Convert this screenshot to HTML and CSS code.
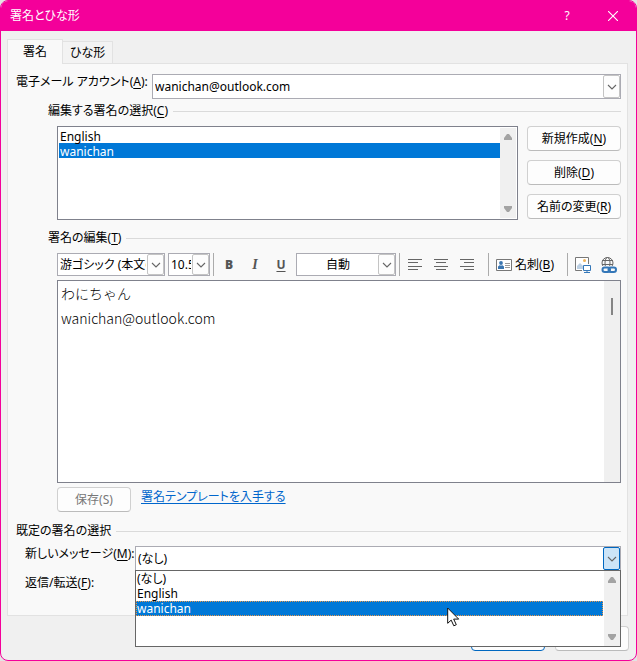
FILE: index.html
```html
<!DOCTYPE html>
<html lang="ja">
<head>
<meta charset="utf-8">
<title>署名とひな形</title>
<link rel="stylesheet" href="styles.css">
</head>
<body>
<svg class="defs" aria-hidden="true">
  <symbol id="chevron" viewBox="0 0 10 6"><path d="M1 1l4 4 4-4" fill="none" stroke="currentColor" stroke-width="1.1"/></symbol>
  <symbol id="up" viewBox="0 0 8 6"><path d="M3 0h2l3 4v2H0V4z" fill="#a3a3a3"/></symbol>
  <symbol id="down" viewBox="0 0 8 6"><path d="M0 0h8v2L5 6H3L0 2z" fill="#a3a3a3"/></symbol>
</svg>
<div class="window">
  <header class="titlebar">
    <h1>署名とひな形</h1>
    <button type="button" class="caption" aria-label="ヘルプ">?</button>
    <button type="button" class="caption" aria-label="閉じる"><svg width="10" height="10" viewBox="0 0 10 10"><path d="M0 0l10 10M10 0L0 10" stroke="#fff" stroke-width="1.1"/></svg></button>
  </header>
  <main class="content">
    <div class="tabs" role="tablist">
      <button type="button" role="tab" aria-selected="true" class="tab active">署名</button>
      <button type="button" role="tab" aria-selected="false" class="tab">ひな形</button>
    </div>
    <div class="panel" role="tabpanel">
      <div class="row">
        <label class="account-label" for="account">電子メール アカウント(<u>A</u>):</label>
        <div class="combo grow">
          <select id="account"><option>wanichan@outlook.com</option></select>
          <span class="arrow"><svg><use href="#chevron"/></svg></span>
        </div>
      </div>

      <section class="group">
        <h2 class="heading first"><label for="signatures">編集する署名の選択(<u>C</u>)</label></h2>
        <div class="indent signatures">
          <div class="listbox grow">
            <select id="signatures" size="5">
              <option>English</option>
              <option selected>wanichan</option>
            </select>
            <span class="scroll"><svg><use href="#up"/></svg><svg><use href="#down"/></svg></span>
          </div>
          <div class="actions">
            <button type="button" class="btn">新規作成(<u>N</u>)</button>
            <button type="button" class="btn">削除(<u>D</u>)</button>
            <button type="button" class="btn">名前の変更(<u>R</u>)</button>
          </div>
        </div>

        <h2 class="heading"><label for="editor">署名の編集(<u>T</u>)</label></h2>
        <div class="indent toolbar">
          <div class="combo font"><select aria-label="フォント"><option>游ゴシック (本文のフォント - 日本語)</option></select><span class="arrow"><svg><use href="#chevron"/></svg></span></div>
          <div class="combo size"><select aria-label="フォント サイズ"><option>10.5</option></select><span class="arrow"><svg><use href="#chevron"/></svg></span></div>
          <span class="sep"></span>
          <div class="styles">
            <button type="button" class="tool" aria-label="太字"><b>B</b></button>
            <button type="button" class="tool" aria-label="斜体"><i>I</i></button>
            <button type="button" class="tool" aria-label="下線"><u>U</u></button>
          </div>
          <div class="combo color"><select aria-label="フォントの色"><option>自動</option></select><span class="arrow"><svg><use href="#chevron"/></svg></span></div>
          <span class="sep"></span>
          <div class="aligns">
            <button type="button" class="tool" aria-label="左揃え"><svg width="14" height="11" viewBox="0 0 14 11"><path d="M0 .5h14M0 3.500h10M0 7.500h14M0 10.500h10" stroke="#666"/></svg></button>
            <button type="button" class="tool" aria-label="中央揃え"><svg width="14" height="11" viewBox="0 0 14 11"><path d="M0 .5h14M2 3.500h10M0 7.500h14M2 10.500h10" stroke="#666"/></svg></button>
            <button type="button" class="tool" aria-label="右揃え"><svg width="14" height="11" viewBox="0 0 14 11"><path d="M0 .5h14M4 3.500h10M0 7.500h14M4 10.500h10" stroke="#666"/></svg></button>
          </div>
          <span class="sep"></span>
          <button type="button" class="tool card">
            <svg width="16" height="12" viewBox="0 0 16 12"><path d="M.5.5h15v11H.5z" fill="#fff" stroke="#777"/><circle cx="5" cy="4" r="1.900" fill="#3a75b0"/><path d="M2 10V7.500L4 6l1 1 1-1 2 1.500V10z" fill="#3a75b0"/><path d="M9 4.500h5M9 6.500h5M9 8.500h5" stroke="#999"/></svg>
            <span>名刺(<u>B</u>)</span>
          </button>
          <span class="sep"></span>
          <div class="inserts">
            <button type="button" class="tool" aria-label="画像"><svg width="16" height="16" viewBox="0 0 16 16"><path d="M7 13.500H.5V.5h13V7" fill="#fff" stroke="#777"/><circle cx="9.500" cy="3.500" r="1.500" fill="#f0b35a"/><path d="M2 12V9l3-3 3 3v3z" fill="#bcd0e4"/><path d="M8.500 8.500h7v5h-7z" fill="#fff" stroke="#3477b8"/><path d="M12 13v2.500M9 15.500h6" stroke="#3477b8"/></svg></button>
            <button type="button" class="tool" aria-label="ハイパーリンク"><svg width="16" height="16" viewBox="0 0 16 16"><g fill="none" stroke="#666"><circle cx="6.500" cy="6" r="5.500"/><ellipse cx="6.500" cy="6" rx="2.500" ry="5.500"/><path d="M1 3.500h11M1 7.500h11"/></g><path d="M1 9h15v7H1z" fill="#f9f9f9"/><g fill="none" stroke="#3477b8" stroke-width="2"><rect x="1.500" y="10.500" width="7.500" height="4.500" rx="2.250"/><rect x="7.500" y="10.500" width="7.500" height="4.500" rx="2.250"/></g></svg></button>
          </div>
        </div>
        <div class="indent editor">
          <textarea id="editor" spellcheck="false">わにちゃん
wanichan@outlook.com</textarea>
          <span class="scroll"><span class="thumb"></span></span>
        </div>
        <div class="indent save">
          <button type="button" class="btn" disabled>保存(S)</button>
          <a href="#templates">署名テンプレートを入手する</a>
        </div>
      </section>

      <section>
        <h2 class="heading">既定の署名の選択</h2>
        <div class="row default">
          <label for="new-message">新しいメッセージ(<u>M</u>):</label>
          <div class="combo grow open">
            <select id="new-message"><option>(なし)</option></select>
            <span class="arrow"><svg><use href="#chevron"/></svg></span>
            <div class="popup">
              <ul role="listbox" aria-label="新しいメッセージ">
                <li role="option">(なし)</li>
                <li role="option">English</li>
                <li role="option" aria-selected="true">wanichan</li>
              </ul>
              <span class="scroll"><svg><use href="#up"/></svg><svg><use href="#down"/></svg></span>
              <svg class="pointer" width="13" height="20" viewBox="0 0 13 20"><path d="M.7 1v15.300l3.500-3.200 2.600 5.700 2.500-1.100-2.600-5.600h5z" fill="#fff" stroke="#111"/></svg>
            </div>
          </div>
        </div>
        <div class="row default">
          <label for="reply">返信/転送(<u>F</u>):</label>
          <div class="combo grow">
            <select id="reply"></select>
            <span class="arrow"><svg><use href="#chevron"/></svg></span>
          </div>
        </div>
      </section>
    </div>
  </main>
  <footer class="footer">
    <button type="button" class="btn primary" aria-label="OK"></button>
    <button type="button" class="btn" aria-label="キャンセル"></button>
  </footer>
</div>
</body>
</html>
```
FILE: styles.css
```css
* { box-sizing: border-box; }

body {
  margin: 0;
  background: #e4e4e4;
  color: #000;
  font: 12px/16px "Noto Sans", "Noto Sans CJK JP", sans-serif;
  font-feature-settings: "palt";
}

button, select { font: inherit; font-feature-settings: inherit; color: inherit; margin: 0; }
h1, h2 { margin: 0; font: inherit; }
u { text-underline-offset: 2px; }
svg { display: block; }
.defs { position: absolute; width: 0; height: 0; }
.grow { flex: 1; min-width: 0; }

.window {
  display: flex;
  flex-direction: column;
  min-height: 100vh;
  border: 1px solid #f4009a;
  border-radius: 8px;
  background: #f0f0f0;
  overflow: hidden;
}

.titlebar { display: flex; height: 30px; padding-left: 9px; background: #f4009a; color: #fff; }
.titlebar h1 { flex: 1; line-height: 30px; }
.caption {
  display: grid;
  place-items: center;
  width: 46px;
  padding: 0;
  border: 0;
  background: none;
}

.content { padding: 8px 8px 0 6px; }
.tabs { display: flex; align-items: flex-end; height: 25px; margin-bottom: -1px; position: relative; }
.tab {
  height: 23px;
  padding: 0 7px;
  border: 1px solid #e2e2e2;
  border-left: 0;
  background: #f3f3f3;
}
.tab.active { height: 25px; padding: 0 15px; border-left: 1px solid #e2e2e2; border-bottom: 0; background: #f9f9f9; }
.panel { padding: 10px 6px 15px 8px; border: 1px solid #e2e2e2; background: #f9f9f9; }

.row { display: flex; align-items: flex-start; }
.account-label { width: 136px; }
.group { padding-left: 32px; }
.indent { margin-left: 9px; }

.heading { display: flex; align-items: center; gap: 5px; margin: 10px 0 7px; }
.heading.first { margin-top: 4px; }
.heading::after { content: ""; flex: 1; height: 1px; background: #dadada; }

.combo { position: relative; display: flex; height: 25px; border: 1px solid #ababb3; background: #fff; }
.combo select {
  appearance: none;
  flex: 1;
  min-width: 0;
  padding: 0 18px 0 2px;
  border: 0;
  border-radius: 0;
  background: none;
  outline: 0;
}
.arrow {
  position: absolute;
  top: 0;
  right: 0;
  bottom: 0;
  display: grid;
  place-items: center;
  width: 17px;
  border: 1px solid #c4c4c4;
  border-radius: 2px;
  background: #fdfdfd;
  color: #666;
  pointer-events: none;
}
.arrow svg { width: 10px; height: 6px; }
.open .arrow { border-color: #0067c0; background: #cce4f7; }

.scroll {
  display: flex;
  flex-direction: column;
  justify-content: space-between;
  align-items: center;
  width: 16px;
  padding: 6px 0;
  background: #f0f0f0;
}
.scroll svg { width: 8px; height: 6px; }

.signatures { display: flex; gap: 9px; }
.listbox { display: flex; height: 94px; padding: 1px; border: 1px solid #7f818c; background: #fff; }
.listbox select {
  flex: 1;
  min-width: 0;
  padding: 0;
  border: 0;
  border-radius: 0;
  outline: 0;
  background: #fff;
  overflow: hidden;
  font-size: 12px;
}
.listbox option { min-height: 15px; height: 15px; padding: 0 1px; line-height: 15px; }
.listbox option:checked { background: #0078d7 linear-gradient(#0078d7, #0078d7); color: #fff; -webkit-text-fill-color: #fff; }
.actions { display: flex; flex-direction: column; gap: 9px; width: 94px; }

.btn {
  height: 25px;
  padding: 0 4px;
  border: 1px solid #d0d0d0;
  border-bottom-color: #bbb;
  border-radius: 4px;
  background: #fdfdfd;
  white-space: nowrap;
}
.btn:disabled { color: #777; }
.primary { border: 1px solid #0067c0; }

.toolbar { display: flex; align-items: center; gap: 3px; height: 23px; }
.toolbar .combo { height: 23px; }
.font { width: 108px; }
.size { width: 42px; }
.color { width: 100px; }
.color select { text-align-last: center; }
.sep { width: 1px; height: 23px; background: #ababab; }
.styles, .aligns, .inserts { display: flex; }
.styles { gap: 6px; padding: 0 2px; }
.aligns { gap: 12px; padding: 0 11px 0 5px; }
.inserts { gap: 10px; padding: 0 4px; }
.tool { display: flex; align-items: center; justify-content: center; padding: 0; border: 0; background: none; }
.styles .tool { width: 20px; color: #555; font-weight: 700; }
.styles i { font-family: "Liberation Serif", serif; font-size: 14px; }
.card { gap: 3px; padding: 0 10px 0 4px; }

.editor { display: flex; height: 203px; margin-top: 4px; border: 1px solid #7f818c; background: #fff; }
.editor textarea {
  flex: 1;
  min-width: 0;
  padding: 0 3px;
  border: 0;
  outline: 0;
  resize: none;
  background: none;
  color: #000;
  font: 14px/25px "Noto Sans CJK JP", sans-serif;
  font-weight: 300;
}
.thumb { width: 2px; height: 17px; margin-top: 11px; background: #858585; }

.save { display: flex; gap: 10px; margin-top: 4px; margin-bottom: 11px; }
.save .btn { width: 74px; }
.save a { height: 16px; margin-top: 2px; color: #0066cc; text-underline-offset: 2px; }

.default { padding-left: 9px; margin-bottom: 4px; }
.default label { width: 110px; white-space: nowrap; }
.default:last-child { margin-bottom: 0; }
.popup {
  position: absolute;
  z-index: 1;
  top: 23px;
  left: -1px;
  right: -1px;
  display: flex;
  height: 77px;
  border: 1px solid #666;
  background: #fff;
}
.popup ul { flex: 1; margin: 0; padding: 0 1px 0 0; list-style: none; line-height: 15px; }
.popup li { padding: 0 1px; }
.popup li[aria-selected="true"] { background: #0078d7; color: #fff; outline: 1px dotted #e8964a; outline-offset: -1px; }
.pointer { position: absolute; top: 36px; left: 311px; }

.footer { display: flex; justify-content: flex-end; gap: 10px; padding: 10px 7px 9px; }
.footer .btn { width: 74px; }
```
